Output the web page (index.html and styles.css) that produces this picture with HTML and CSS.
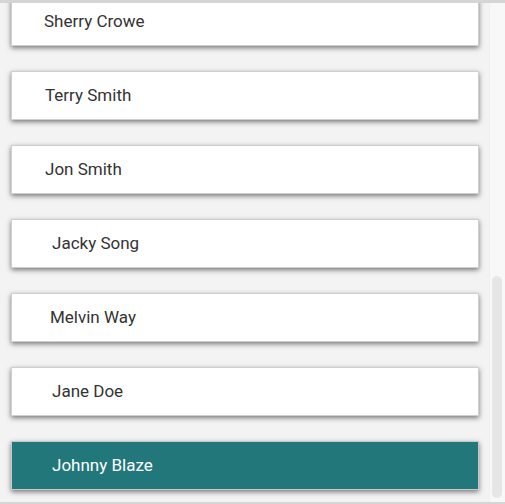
FILE: index.html
```html
<!DOCTYPE html>
<html>
<head>
<meta charset="utf-8">
<link rel="stylesheet" href="styles.css">
</head>
<body>
<div class="frame">
  <div class="list">
    <div class="card pad-33">Sherry Crowe</div>
    <div class="card pad-34">Terry Smith</div>
    <div class="card pad-34">Jon Smith</div>
    <div class="card pad-41">Jacky Song</div>
    <div class="card pad-38">Melvin Way</div>
    <div class="card pad-41">Jane Doe</div>
    <div class="card pad-41 selected">Johnny Blaze</div>
  </div>
  <div class="scrollbar">
    <div class="thumb"></div>
  </div>
</div>
</body>
</html>
```

FILE: styles.css
```css
html, body {
  margin: 0;
  padding: 0;
}
body {
  background: #f3f3f3;
  font-family: Roboto, "Liberation Sans", Arial, sans-serif;
}
.frame {
  box-sizing: border-box;
  height: 504px;
  border-top: 3px solid #d5d5d5;
  border-bottom: 2px solid #d5d5d5;
  display: flex;
  background: #f3f3f3;
}
.list {
  flex: 1;
  overflow: hidden;
  display: flex;
  flex-direction: column;
  justify-content: flex-end;
  gap: 25px;
  padding: 0 10px 12px 11px;
}
.card {
  flex: none;
  box-sizing: border-box;
  height: 49px;
  padding-bottom: 2px;
  background: #fff;
  border: 1px solid #cfcfcf;
  box-shadow: 0 2px 5px rgba(0, 0, 0, 0.5);
  display: flex;
  align-items: center;
  font-size: 17px;
  color: #333;
}
.pad-33 { padding-left: 32px; }
.pad-34 { padding-left: 33px; }
.pad-38 { padding-left: 38px; }
.pad-41 { padding-left: 40px; }
.card.selected {
  background: #22777a;
  border-color: #c9c9c9;
  color: #fff;
}
.scrollbar {
  width: 16px;
  background: #f8f8f8;
  border-left: 1px solid #efefef;
  box-sizing: border-box;
  display: flex;
  flex-direction: column;
  justify-content: flex-end;
  padding: 0 3px 4px 2px;
}
.thumb {
  height: 222px;
  background: #e6e6e6;
  border-radius: 5px;
}
```
